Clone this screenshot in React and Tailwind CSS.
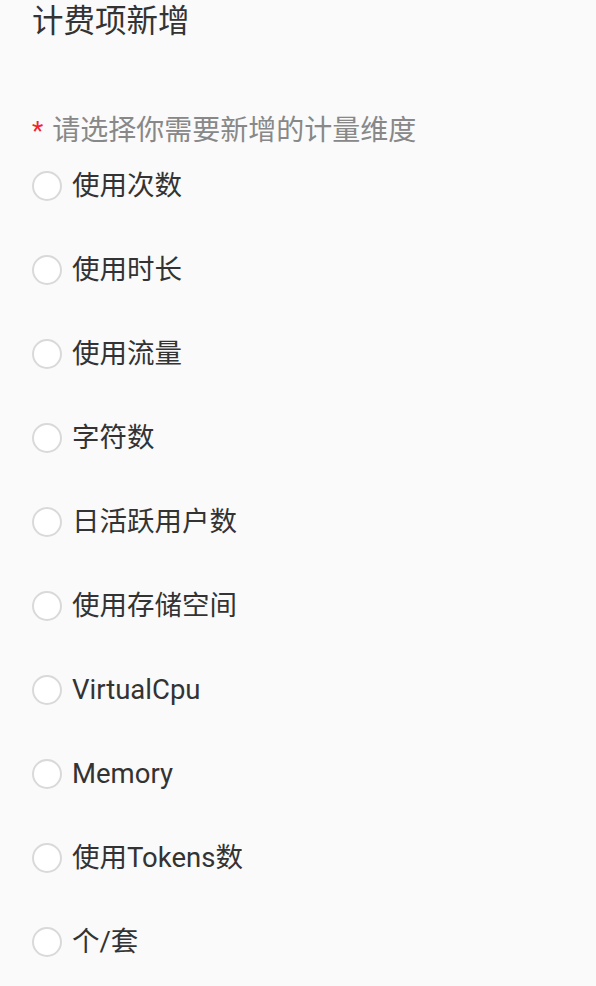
const options = [
  '使用次数',
  '使用时长',
  '使用流量',
  '字符数',
  '日活跃用户数',
  '使用存储空间',
  'VirtualCpu',
  'Memory',
  '使用Tokens数',
  '个/套',
]

export default function App() {
  return (
    <div
      className="min-h-[986px] bg-[#fafafa] px-8"
      style={{ fontFamily: 'Roboto, "Noto Sans CJK SC", sans-serif' }}
    >
      {/* Page title */}
      <h1 className="h-[44px] text-[31.5px] leading-[44px] text-[#333] font-normal">
        计费项新增
      </h1>

      {/* Field label */}
      <div className="mt-[67px] flex h-[40px] items-center text-[28px] leading-[40px] text-[#888]">
        <span className="mr-[9px] text-[26px] text-[#f5222d]">*</span>
        请选择你需要新增的计量维度
      </div>

      {/* Radio list */}
      <div className="mt-[15px] flex flex-col gap-[44px]">
        {options.map(opt => (
          <label key={opt} className="flex h-[40px] items-center gap-[10px] cursor-pointer">
            <span className="h-[30px] w-[30px] shrink-0 rounded-full border-2 border-[#d9d9d9] bg-white" />
            <span className="text-[27.5px] leading-[40px] text-[#333]">{opt}</span>
          </label>
        ))}
      </div>
    </div>
  )
}
